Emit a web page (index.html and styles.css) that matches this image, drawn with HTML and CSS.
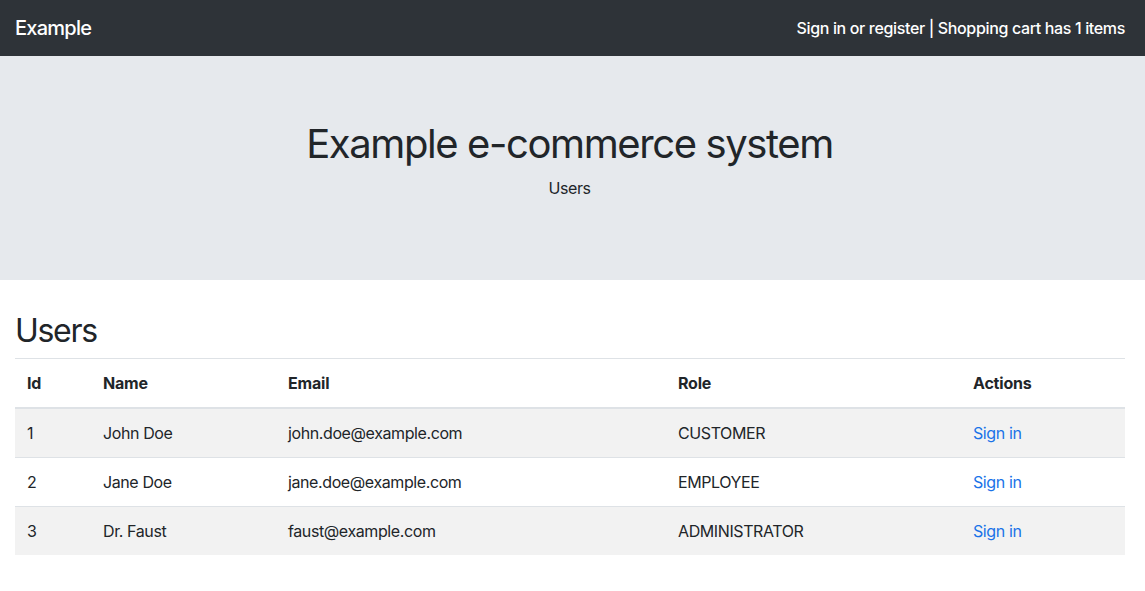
FILE: index.html
```html
<!DOCTYPE html>
<html lang="en">
<head>
<meta charset="utf-8">
<title>Users</title>
<link rel="stylesheet" href="styles.css">
</head>
<body>
<nav class="navbar">
  <a class="brand" href="#">Example</a>
  <span class="nav-text"><a href="#">Sign in or register</a> | <a href="#">Shopping cart has 1 items</a></span>
</nav>
<header class="jumbotron">
  <h1>Example e-commerce system</h1>
  <p>Users</p>
</header>
<main class="content">
  <h2>Users</h2>
  <table class="table">
    <thead>
      <tr>
        <th class="col-id">Id</th>
        <th class="col-name">Name</th>
        <th class="col-email">Email</th>
        <th class="col-role">Role</th>
        <th class="col-actions">Actions</th>
      </tr>
    </thead>
    <tbody>
      <tr><td>1</td><td>John Doe</td><td>john.doe@example.com</td><td>CUSTOMER</td><td><a href="#">Sign in</a></td></tr>
      <tr><td>2</td><td>Jane Doe</td><td>jane.doe@example.com</td><td>EMPLOYEE</td><td><a href="#">Sign in</a></td></tr>
      <tr><td>3</td><td>Dr. Faust</td><td>faust@example.com</td><td>ADMINISTRATOR</td><td><a href="#">Sign in</a></td></tr>
    </tbody>
  </table>
</main>
</body>
</html>
```
FILE: styles.css
```css
* { box-sizing: border-box; }
html, body { margin: 0; padding: 0; }
body {
  font-family: Inter, "Noto Sans", "Liberation Sans", sans-serif;
  font-size: 16px;
  line-height: 1.5;
  color: #212529;
  background: #fff;
  letter-spacing: -0.4px;
}
a { text-decoration: none; }
.navbar {
  height: 56px;
  background: #2e3338;
  display: flex;
  align-items: center;
  justify-content: space-between;
  padding: 0 20px 0 15px;
}
.brand {
  color: #fff;
  font-size: 20px;
  font-weight: 500;
  letter-spacing: -0.75px;
}
.nav-text { color: #fff; font-size: 16px; font-weight: 500; letter-spacing: -0.35px; }
.nav-text a { color: #fff; }
.jumbotron {
  background: #e6e9ed;
  padding: 64px 38px 64px 32px;
  text-align: center;
  margin-bottom: 32px;
}
.jumbotron h1 {
  margin: 0 0 8px;
  font-size: 40px;
  font-weight: 400;
  line-height: 1.2;
  letter-spacing: -1.4px;
}
.jumbotron p { margin: 0 0 16px; }
.content { padding: 0 20px 0 15px; }
.content h2 {
  margin: 0 0 8px;
  font-size: 32px;
  font-weight: 400;
  line-height: 1.2;
  letter-spacing: -1.3px;
}
.table { width: 100%; border-collapse: collapse; }
.table th, .table td {
  padding: 12px;
  text-align: left;
  border-top: 1px solid #dee2e6;
  vertical-align: top;
}
.table th { font-weight: 700; letter-spacing: -0.2px; }
.table thead th { border-bottom: 2px solid #dee2e6; }
.table tbody tr:nth-child(odd) { background: #f2f2f2; }
.table td a { color: #1a73e8; }
.col-id { width: 76px; }
.col-name { width: 185px; }
.col-email { width: 390px; }
.col-role { width: 295px; }
.col-actions { width: 164px; }
```
